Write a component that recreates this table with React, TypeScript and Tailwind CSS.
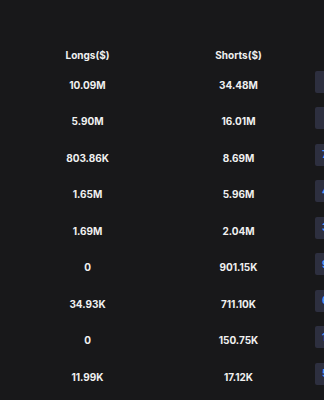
import React from 'react';

interface Row {
    longs: string;
    shorts: string;
    net: string;
    pad: string;
}

const rows: Row[] = [
    { longs: '10.09M', shorts: '34.48M', net: '24.39M', pad: 'pl-[12px]' },
    { longs: '5.90M', shorts: '16.01M', net: '10.11M', pad: 'pl-[12px]' },
    { longs: '803.86K', shorts: '8.69M', net: '7.89M', pad: 'pl-[7px]' },
    { longs: '1.65M', shorts: '5.96M', net: '4.31M', pad: 'pl-[7px]' },
    { longs: '1.69M', shorts: '2.04M', net: '351.00K', pad: 'pl-[7px]' },
    { longs: '0', shorts: '901.15K', net: '901.15K', pad: 'pl-[7px]' },
    { longs: '34.93K', shorts: '711.10K', net: '676.17K', pad: 'pl-[7px]' },
    { longs: '0', shorts: '150.75K', net: '150.75K', pad: 'pl-[7px]' },
    { longs: '11.99K', shorts: '17.12K', net: '5.13K', pad: 'pl-[7px]' },
];

const App: React.FC = () => {
    return (
        <div
            className="w-[324px] h-[400px] overflow-hidden bg-[#18181a] text-[#f0f0f0] text-[10px] font-bold"
            style={{ fontFamily: 'Inter, "Liberation Sans", sans-serif' }}
        >
            <div className="pt-[43px] pl-3">
                {/* header */}
                <div className="grid grid-cols-[151px_151px_80px] h-6 items-center">
                    <div className="text-center">Longs($)</div>
                    <div className="text-center">Shorts($)</div>
                    <div />
                </div>

                {rows.map((r, i) => (
                    <div key={i} className="grid grid-cols-[151px_151px_80px] h-[36.5px] items-center">
                        <div className="text-center">{r.longs}</div>
                        <div className="text-center">{r.shorts}</div>
                        <div className="pl-px">
                            <div className={`h-[22px] w-[64px] -mt-[7px] rounded-[2px] bg-[#2d2f3f] text-[#4d9bff] flex items-center ${r.pad}`}>
                                {r.net}
                            </div>
                        </div>
                    </div>
                ))}
            </div>
        </div>
    );
};

export default App;
